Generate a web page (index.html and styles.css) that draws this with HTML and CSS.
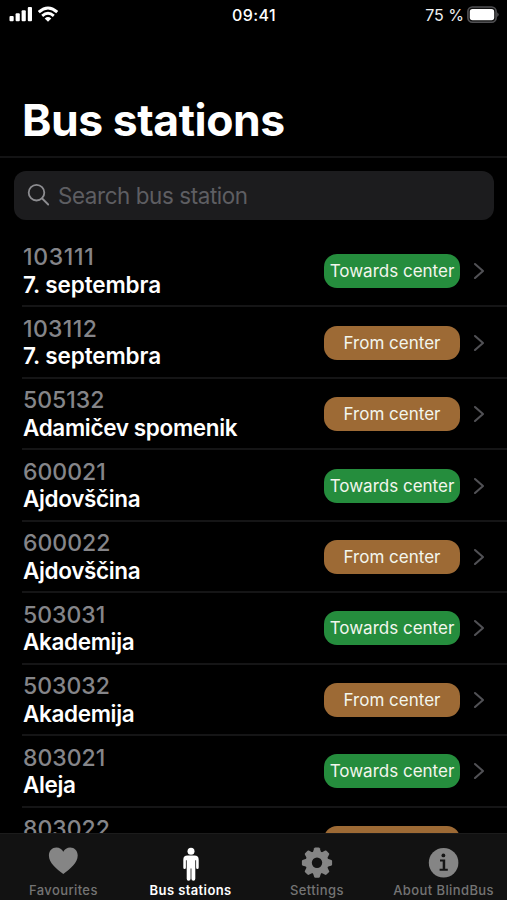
FILE: index.html
```html
<!DOCTYPE html>
<html lang="en">
<head>
<meta charset="utf-8">
<title>Bus stations</title>
<link rel="stylesheet" href="styles.css">
</head>
<body>
<div class="app">
  <header class="status">
    <div class="signals">
      <svg width="24" height="16" viewBox="0 0 24 16" fill="#fff"><rect x="0.5" y="10" width="4.2" height="5.3" rx="1"/><rect x="6.6" y="7.3" width="4.2" height="8" rx="1"/><rect x="12.6" y="4.2" width="4.2" height="11.1" rx="1"/><rect x="18.8" y="1" width="4.2" height="14.3" rx="1"/></svg>
      <svg width="20" height="16" viewBox="0 0 20 16" fill="none" stroke="#fff" stroke-width="2.9"><path d="M.8 6.1Q10-2 19.2 6.1M4.2 9.8Q10 4.8 15.8 9.8"/><path d="M6.7 12.4Q10 9.7 13.3 12.4L10 15.8Z" fill="#fff" stroke="none"/></svg>
    </div>
    <time class="clock">09:41</time>
    <div class="power">
      <span class="percent">75 %</span>
      <svg width="32" height="18" viewBox="0 0 32 18"><rect x=".9" y="1" width="28.2" height="15.2" rx="4.5" fill="#111" stroke="#505053" stroke-width="1.6"/><rect x="2.8" y="3" width="24.4" height="11.3" rx="2.7" fill="#fff"/><path d="M30.2 6.2q3 2.3 0 4.8z" fill="#505053"/></svg>
    </div>
  </header>
  <div class="heading"><h1>Bus stations</h1></div>
  <div class="search">
    <svg width="24" height="24" viewBox="0 0 24 24" fill="none" stroke="#8c8c90" stroke-width="1.8" stroke-linecap="round"><circle cx="9.5" cy="9.7" r="7.8"/><path d="M15.2 15.5l6 6"/></svg>
    <span>Search bus station</span>
  </div>
  <main class="list">
    <div class="row"><div class="stop"><span class="code ones">103111</span><span class="name numbered">7. septembra</span></div><span class="tag towards">Towards center</span><svg class="chev" viewBox="0 0 12 18"><path d="M2 2l8 7-8 7"/></svg></div>
    <div class="row"><div class="stop"><span class="code two-ones">103112</span><span class="name numbered">7. septembra</span></div><span class="tag from">From center</span><svg class="chev" viewBox="0 0 12 18"><path d="M2 2l8 7-8 7"/></svg></div>
    <div class="row"><div class="stop"><span class="code">505132</span><span class="name">Adamičev spomenik</span></div><span class="tag from">From center</span><svg class="chev" viewBox="0 0 12 18"><path d="M2 2l8 7-8 7"/></svg></div>
    <div class="row"><div class="stop"><span class="code">600021</span><span class="name">Ajdovščina</span></div><span class="tag towards">Towards center</span><svg class="chev" viewBox="0 0 12 18"><path d="M2 2l8 7-8 7"/></svg></div>
    <div class="row"><div class="stop"><span class="code">600022</span><span class="name">Ajdovščina</span></div><span class="tag from">From center</span><svg class="chev" viewBox="0 0 12 18"><path d="M2 2l8 7-8 7"/></svg></div>
    <div class="row"><div class="stop"><span class="code">503031</span><span class="name">Akademija</span></div><span class="tag towards">Towards center</span><svg class="chev" viewBox="0 0 12 18"><path d="M2 2l8 7-8 7"/></svg></div>
    <div class="row"><div class="stop"><span class="code">503032</span><span class="name">Akademija</span></div><span class="tag from">From center</span><svg class="chev" viewBox="0 0 12 18"><path d="M2 2l8 7-8 7"/></svg></div>
    <div class="row"><div class="stop"><span class="code">803021</span><span class="name">Aleja</span></div><span class="tag towards">Towards center</span><svg class="chev" viewBox="0 0 12 18"><path d="M2 2l8 7-8 7"/></svg></div>
    <div class="row"><div class="stop"><span class="code">803022</span><span class="name"></span></div><span class="tag from"></span><span class="chev"></span></div>
  </main>
  <nav class="tabs">
    <div class="tab"><svg width="36" height="36" viewBox="0 0 36 36"><path d="M18.3 32C11.3 26.7 3.9 20.6 3.9 13.4C3.9 8.7 7.2 5.5 11.4 5.5C14.5 5.5 17 7.2 18.3 9.7C19.6 7.2 22.1 5.5 25.2 5.5C29.4 5.5 32.7 8.7 32.7 13.4C32.7 20.6 25.3 26.7 18.3 32Z"/></svg><span>Favourites</span></div>
    <div class="tab active"><svg width="36" height="36" viewBox="0 0 36 36"><circle cx="18" cy="9.2" r="3.5"/><path d="M14.5 13.6h7Q25.7 13.6 25.7 17.8V25.6Q25.7 27.1 24.4 27.1Q23.1 27.1 23.1 25.6V18.2H22.3V36.8Q22.3 38.7 20.5 38.7Q18.4 38.7 18.4 36.8V26.6H17.6V36.8Q17.6 38.7 15.5 38.7Q13.7 38.7 13.7 36.8V18.2H12.9V25.6Q12.9 27.1 11.6 27.1Q10.3 27.1 10.3 25.6V17.8Q10.3 13.6 14.5 13.6Z"/></svg><span>Bus stations</span></div>
    <div class="tab"><svg width="36" height="36" viewBox="0 0 36 36"><g transform="translate(18 20.7)"><path id="tooth" d="M-4.2-10L-2.8-14.4Q-2.5-15.1-1.7-15.1H1.7Q2.5-15.1 2.8-14.4L4.2-10V-7H-4.2Z"/><use href="#tooth" transform="rotate(45)"/><use href="#tooth" transform="rotate(90)"/><use href="#tooth" transform="rotate(135)"/><use href="#tooth" transform="rotate(180)"/><use href="#tooth" transform="rotate(225)"/><use href="#tooth" transform="rotate(270)"/><use href="#tooth" transform="rotate(315)"/><circle r="11.5"/><circle r="5.2" fill="#121212"/></g></svg><span>Settings</span></div>
    <div class="tab"><svg width="36" height="36" viewBox="0 0 36 36"><circle cx="17.6" cy="20.7" r="14.8"/><g fill="#151515"><circle cx="17.4" cy="13.4" r="1.9"/><path d="M14 17.4h5.2v9.3h2.6v2h-8.2v-2h3.1v-7.3h-2.7z"/></g></svg><span>About BlindBus</span></div>
  </nav>
</div>
</body>
</html>
```
FILE: styles.css
```css
* { box-sizing: border-box; }
body { margin: 0; background: #000; font-family: Inter, "Liberation Sans", sans-serif; color: #fff; }
.app { width: 507px; height: 900px; display: flex; flex-direction: column; overflow: hidden; background: #000; }
.status { height: 30px; flex: none; display: grid; grid-template-columns: 1fr auto 1fr; align-items: center; padding: 0 8px 0 9px; }
.signals { display: flex; gap: 5px; padding-bottom: 2px; }
.clock { font-size: 16px; font-weight: 500; letter-spacing: .4px; }
.power { display: flex; justify-content: flex-end; align-items: center; gap: 3px; padding-bottom: 1px; }
.percent { font-size: 16px; font-weight: 400; color: #f0f0f0; }
.heading { height: 128px; flex: none; border-bottom: 2px solid #131314; display: flex; align-items: flex-end; padding: 0 22px 9px; }
h1 { margin: 0; font-size: 44.5px; line-height: 54px; font-weight: 700; white-space: nowrap; letter-spacing: -.45px; }
.search { flex: none; margin: 12.5px 13px 16.5px 14px; height: 49px; border-radius: 12px; background: #1c1c1e; display: flex; align-items: center; padding-left: 13px; gap: 7px; font-size: 22.4px; letter-spacing: -.4px; color: #5e5e62; }
.list { flex: 1; min-height: 0; overflow: hidden; }
.row { height: 71.45px; margin-left: 22px; display: flex; align-items: center; border-bottom: 2px solid #151516; padding-right: 22px; }
.stop { flex: 1; display: flex; flex-direction: column; padding-top: 2.5px; padding-left: 1px; }
.code, .name { font-size: 23px; line-height: 27.5px; white-space: nowrap; }
.code { height: 27.5px; font-weight: 500; color: #858589; }
.ones { letter-spacing: .65px; }
.two-ones { letter-spacing: .35px; }
.name { height: 27.5px; line-height: 26px; font-size: 22.5px; font-weight: 600; letter-spacing: -.35px; }
.numbered { letter-spacing: -.1px; }
.tag { width: 136px; height: 34px; border-radius: 13px; display: flex; align-items: center; justify-content: center; font-size: 17px; white-space: nowrap; color: #f3f6ed; margin-top: 1px; }
.towards { background: #258d3d; }
.from { background: #9d6a35; }
.chev { width: 12px; height: 18px; margin: 1px 0 0 13px; fill: none; stroke: #515155; stroke-width: 2.1; stroke-linecap: round; stroke-linejoin: round; }
.tabs { height: 67px; flex: none; background: #121212; border-top: 1px solid #1c1c1c; display: grid; grid-template-columns: repeat(4, 1fr); }
.tab { display: flex; flex-direction: column; align-items: center; color: #747474; fill: #858585; font-size: 13px; font-weight: 500; letter-spacing: .4px; white-space: nowrap; }
.tab svg { overflow: visible; margin-top: 8px; }
.tab span { line-height: 16px; margin-top: 4px; }
.active { color: #fff; fill: #fff; font-weight: 600; padding-left: 1px; }
```
